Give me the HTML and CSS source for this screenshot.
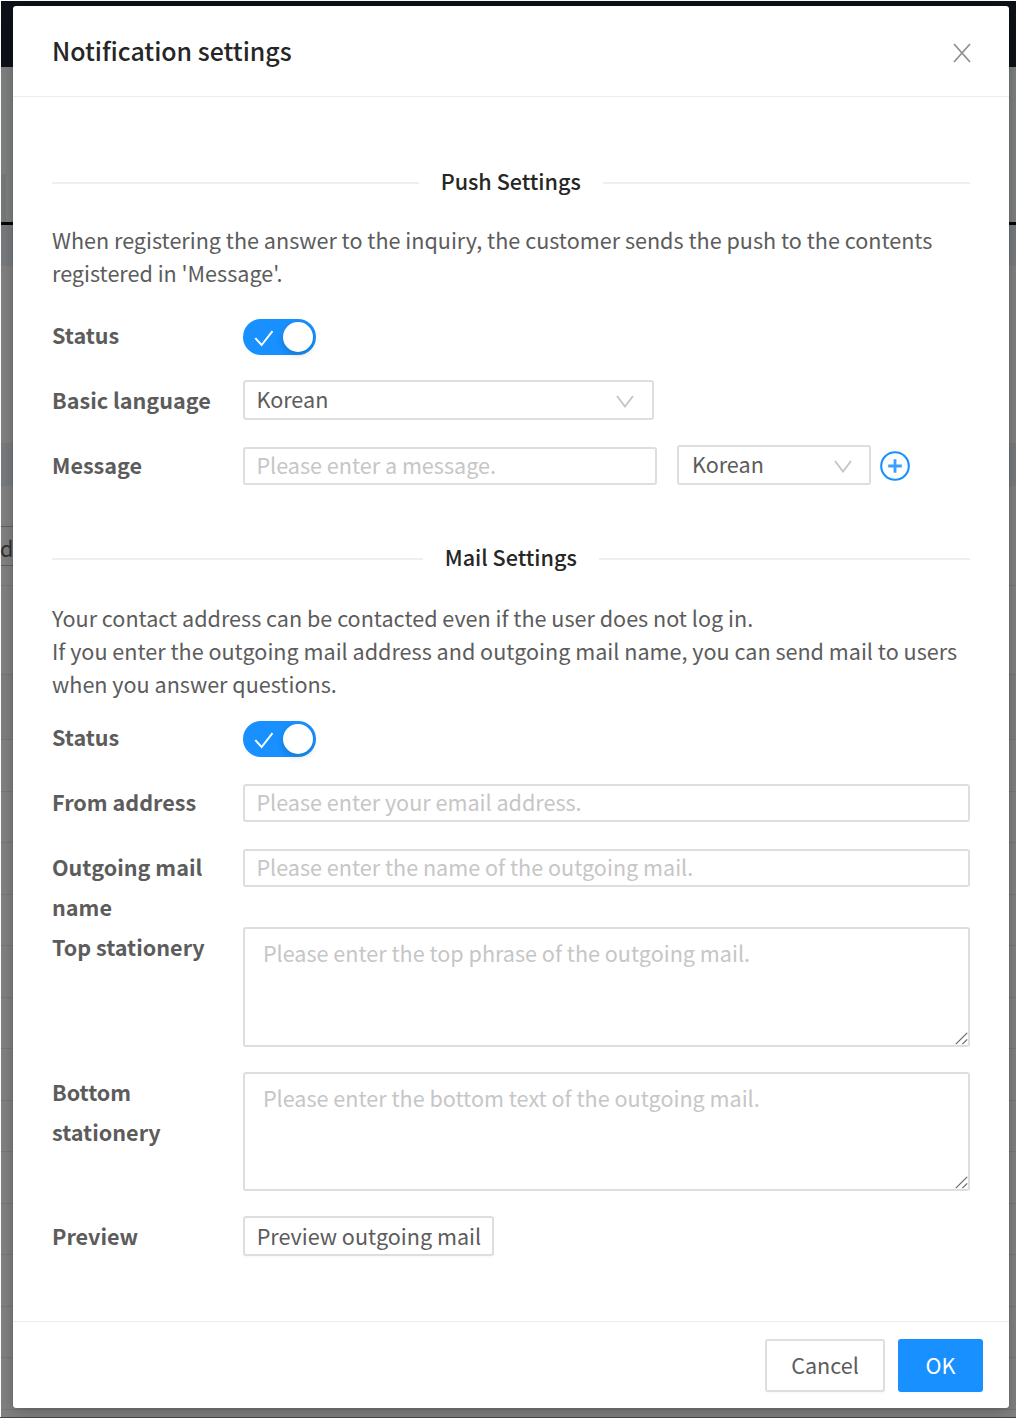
FILE: index.html
```html
<!DOCTYPE html>
<html lang="en">
<head>
<meta charset="utf-8">
<title>Notification settings</title>
<link rel="stylesheet" href="styles.css">
</head>
<body>
<div class="page">
  <div class="page-nav"></div>
  <div class="page-top"><div class="page-tab"></div></div>
  <div class="page-rule"></div>
  <div class="page-band band-one"></div>
  <div class="page-gap"></div>
  <div class="page-band band-two"></div>
  <div class="page-filter"><span class="page-field">d</span></div>
  <div class="page-head"></div>
  <div class="page-row"></div>
  <div class="page-rows"></div>
</div>

<section class="modal">
  <header class="modal-header">
    <h1 class="modal-title">Notification settings</h1>
    <svg class="close" viewBox="0 0 18 20"><path d="M1 1L17 19M17 1L1 19"/></svg>
  </header>

  <div class="modal-body">
    <h2 class="divider"><span class="divider-text">Push Settings</span></h2>
    <p class="intro">When registering the answer to the inquiry, the customer sends the push to the contents<br>registered in 'Message'.</p>
    <div class="row">
      <span class="label">Status</span>
      <span class="switch"><svg class="check" viewBox="0 0 20 17"><path d="M1.3 8.2L7.6 15L18.5 1.2"/></svg><span class="knob"></span></span>
    </div>
    <div class="row">
      <span class="label">Basic language</span>
      <div class="select select-wide"><span>Korean</span><svg class="arrow" viewBox="0 0 18 13"><path d="M1 1L9 11.5L17 1"/></svg></div>
    </div>
    <div class="row">
      <span class="label">Message</span>
      <div class="message">
        <input class="input input-message" type="text" placeholder="Please enter a message.">
        <div class="select select-small"><span>Korean</span><svg class="arrow" viewBox="0 0 18 13"><path d="M1 1L9 11.5L17 1"/></svg></div>
        <svg class="plus" viewBox="0 0 30 30"><circle cx="15" cy="15" r="13.8"/><path class="plus-sign" d="M15 8.2V21.8M8.2 15H21.8"/></svg>
      </div>
    </div>

    <h2 class="divider divider-mail"><span class="divider-text">Mail Settings</span></h2>
    <p class="intro intro-mail">Your contact address can be contacted even if the user does not log in.<br>If you enter the outgoing mail address and outgoing mail name, you can send mail to users<br>when you answer questions.</p>
    <div class="row">
      <span class="label">Status</span>
      <span class="switch"><svg class="check" viewBox="0 0 20 17"><path d="M1.3 8.2L7.6 15L18.5 1.2"/></svg><span class="knob"></span></span>
    </div>
    <div class="row">
      <span class="label">From address</span>
      <input class="input" type="text" placeholder="Please enter your email address.">
    </div>
    <div class="row row-flush">
      <span class="label">Outgoing mail<br>name</span>
      <input class="input" type="text" placeholder="Please enter the name of the outgoing mail.">
    </div>
    <div class="row">
      <span class="label">Top stationery</span>
      <div class="area area-top"><textarea class="textarea" placeholder="Please enter the top phrase of the outgoing mail."></textarea><svg class="grip" viewBox="0 0 13 13"><path d="M.8 12.2L12.2 .8M7.4 12.2L12.2 7.4"/></svg></div>
    </div>
    <div class="row">
      <span class="label label-low">Bottom<br>stationery</span>
      <div class="area"><textarea class="textarea" placeholder="Please enter the bottom text of the outgoing mail."></textarea><svg class="grip" viewBox="0 0 13 13"><path d="M.8 12.2L12.2 .8M7.4 12.2L12.2 7.4"/></svg></div>
    </div>
    <div class="row">
      <span class="label label-low">Preview</span>
      <button class="button button-preview">Preview outgoing mail</button>
    </div>
  </div>

  <footer class="modal-footer">
    <button class="button">Cancel</button>
    <button class="button button-primary">OK</button>
  </footer>
</section>
</body>
</html>
```
FILE: styles.css
```css
* { box-sizing: border-box; }
body {
  margin: 0;
  position: relative;
  height: 1418px;
  overflow: hidden;
  background: #fff;
  color: #5c5c5c;
  font-family: "Noto Sans CJK KR", "Noto Sans", sans-serif;
  font-size: 21.58px;
}
h1, h2, p { margin: 0; font-weight: 500; }

/* dimmed page behind the dialog */
.page {
  display: flex;
  flex-direction: column;
  height: 1418px;
  padding: 1px 0 0 1px;
  border-bottom: 1px solid #474447;
  background: #828282;
  background-clip: content-box;
}
.page-nav { height: 66px; background: #0d1218; }
.page-top { height: 155px; padding-top: 107px; background: #7f8181; }
.page-tab { width: 5px; height: 48px; background: #787a79; }
.page-rule { height: 3px; background: #050505; }
.page-band { background: #797c7f; }
.band-one { height: 41px; }
.page-gap { height: 177px; }
.band-two { height: 43px; }
.page-filter { height: 100px; padding-top: 40px; border-bottom: 1px solid #777; }
.page-field {
  display: block;
  width: 12px;
  height: 40px;
  border: solid #606060;
  border-width: 1px 0;
  color: #303030;
  line-height: 41px;
  text-indent: -1px;
}
.page-head { height: 89px; border-bottom: 1px solid #777; }
.page-row { height: 65px; background: #7f7f7f; border-bottom: 1px solid #777; }
.page-rows { flex: 1; background: repeating-linear-gradient(#828282 0 50.5px, #777 50.5px 51.5px); }

.modal {
  position: absolute;
  left: 13px;
  top: 6px;
  width: 996px;
  height: 1402px;
  display: flex;
  flex-direction: column;
  border-radius: 3px;
  background: #fff;
  box-shadow: 0 4px 16px rgba(0, 0, 0, .25), 0 0 1px rgba(0, 0, 0, .5);
}
.modal-header {
  display: flex;
  justify-content: space-between;
  align-items: center;
  height: 91px;
  padding: 0 38px 0 39px;
  border-bottom: 1px solid #ececec;
}
.modal-title { margin-bottom: 2px; font-size: 24.9px; color: #262626; line-height: 36px; }
.close { width: 18px; height: 20px; margin-top: 4px; fill: none; stroke: #919191; stroke-width: 1.8; }

.modal-body { flex: 1; padding: 69px 39.5px 0 39px; }
.divider {
  display: flex;
  align-items: center;
  gap: 22px;
  height: 34px;
  color: #262626;
  font-size: 21.58px;
  line-height: 34px;
  white-space: nowrap;
}
.divider::before, .divider::after { content: ""; flex: 1; height: 2px; background: #efefef; }
.divider-text { margin-bottom: 5px; }
.divider-mail { margin-top: 55.5px; }
.divider-mail .divider-text { margin-bottom: 3px; }
.intro { margin: 23px 0 26.6px; font-weight: 400; line-height: 33.2px; white-space: nowrap; }
.intro-mail { margin: 25px 0 17.9px; }

.row {
  display: grid;
  grid-template-columns: 191.4px 1fr;
  align-items: start;
  margin-bottom: 25px;
}
.row-flush { margin-bottom: 0; }
.label { margin-top: -1.5px; padding-bottom: 1.5px; font-weight: 700; line-height: 40px; }
.label-low { margin-top: -.4px; padding-bottom: .4px; }

.switch {
  display: flex;
  align-items: center;
  justify-content: space-between;
  width: 73px;
  height: 36px;
  margin-top: 3px;
  padding: 3px 3px 3px 11px;
  border-radius: 18px;
  background: #1890ff;
}
.check { width: 20px; height: 17px; margin-top: 3px; fill: none; stroke: #fff; stroke-width: 1.9; }
.knob { width: 30px; height: 30px; border-radius: 50%; background: #fff; box-shadow: 0 3px 6px rgba(0, 35, 11, .2); }

.select, .input, .textarea, .button {
  border: 2px solid #dedede;
  border-radius: 3px;
  background: #fff;
  color: #5c5c5c;
  font: inherit;
}
.select {
  display: flex;
  align-items: center;
  justify-content: space-between;
  height: 40px;
  padding: 0 17.5px 2px 11px;
  line-height: 34px;
}
.select-wide { width: 410.5px; margin-top: -1px; }
.select-small { width: 194px; margin: -1px 9px 0 20px; padding-left: 12.5px; }
.arrow { width: 18px; height: 13px; margin-top: 4px; fill: none; stroke: #c4c4c4; stroke-width: 1.8; }
.message { display: flex; align-items: flex-start; }
.plus { width: 30px; height: 30px; margin-top: 5px; fill: none; stroke: #1890ff; stroke-width: 2.1; }
.plus-sign { stroke-width: 2.8; stroke: #3b9fff; }
.input { width: 100%; height: 38px; margin-top: 1px; padding: 0 11px 3px; }
.input-message { width: 414px; padding-bottom: 4px; }
.input::placeholder, .textarea::placeholder { color: #c6c6c6; opacity: 1; }
.area { position: relative; height: 119px; }
.area-top { height: 120px; margin-top: -1px; }
.textarea { display: block; width: 100%; height: 100%; padding: 7px 17.5px; line-height: 33px; resize: none; }
.grip { position: absolute; right: 2px; bottom: 2px; width: 13px; height: 13px; fill: none; stroke: #666; stroke-width: 1.2; }

.button { height: 53px; padding: 0 24px 2px; line-height: 46px; box-shadow: 0 2px 1px rgba(0, 0, 0, .02); }
.button-preview { justify-self: start; width: 251px; height: 40px; padding: 0; line-height: 36px; }
.modal-footer {
  display: flex;
  justify-content: flex-end;
  gap: 13px;
  height: 87px;
  padding: 17px 26px 0 0;
  border-top: 1px solid #ececec;
}
.modal-footer .button { width: 120px; }
.modal-footer .button-primary { width: 85px; border-color: #1890ff; background: #1890ff; color: #fff; }
```
